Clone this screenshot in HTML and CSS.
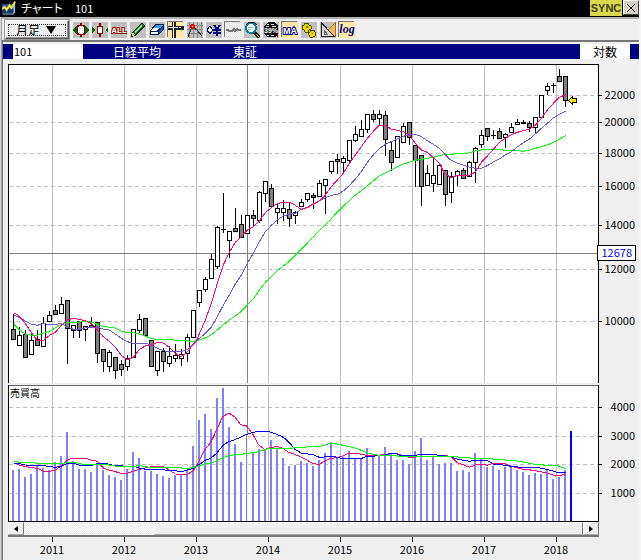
FILE: index.html
```html
<!DOCTYPE html>
<html lang="ja">
<head>
<meta charset="utf-8">
<title>チャート 101</title>
<link rel="stylesheet" href="styles.css">
</head>
<body>
<div class="window">
  <header class="titlebar">
    <svg class="app-icon" viewBox="0 0 16 16" aria-hidden="true"><path fill="#315b9c" d="M0 4h12v10H0z"/><path fill="#a8bfe0" d="M12 4l2-1v10l-2 2zM1 14h11v1H1z"/><path fill="#17366e" d="M0 9h12v4H0z"/><path fill="none" stroke="#f5e642" stroke-width="2" d="M0 9l3-2 2 3 3-5 2 3 4-7"/></svg>
    <h1 class="title">チャート</h1>
    <span class="title-code">101</span>
    <button class="sync" type="button">SYNC</button>
    <button class="close" type="button" aria-label="閉じる"><svg viewBox="0 0 10 10"><path d="M1 1l8 8M9 1L1 9"/></svg></button>
  </header>

  <nav class="toolbar" aria-label="ツール">
    <label class="period">
      <select aria-label="足種"><option>月足</option></select>
      <svg class="period-arrow" viewBox="0 0 10 8" aria-hidden="true"><path d="M0 0h10L5 8z"/></svg>
    </label>
    <button class="tool" type="button" aria-label="拡大"><svg viewBox="0 0 16 16"><path fill="#006400" d="M0 8l4-5v10zM16 8l-4-5v10z"/><path fill="#8b0000" d="M7 1h2v2h3v10H9v2H7v-2H4V3h3z"/><path fill="#fff" d="M6 4h4v1h1v6h-1v1H6v-1H5V5h1z"/></svg></button>
    <button class="tool" type="button" aria-label="縮小"><svg viewBox="0 0 16 16"><path fill="#8b0000" d="M7 1h2v3h2v8H9v3H7v-3H5V4h2z"/><path fill="#fff" d="M6 5h4v6H6z"/><path fill="#006400" d="M0 5l3 3-3 3zM16 5l-3 3 3 3z"/></svg></button>
    <button class="tool" type="button" aria-label="全体"><svg viewBox="0 0 16 16"><text class="glyph-all" x="8" y="11">ALL</text></svg></button>
    <button class="tool" type="button" aria-label="線を引く"><svg viewBox="0 0 16 16"><path fill="#002b00" d="M1 15l1-5L12 1l2 1 1 2L5 14z"/><path fill="#26842c" d="M3 10l9-8 2 2-9 8z"/><path fill="#8fe58f" d="M4 10l8-7v1l-7 7z"/><path fill="#e8d7a0" d="M2 13l1-3 2 3-3 1z"/></svg></button>
    <button class="tool" type="button" aria-label="消しゴム"><svg viewBox="0 0 16 16"><path fill="#00204a" d="M6 2h9v5l-5 6H1V9z"/><path fill="#fff" d="M4 6h6l-2 3H2z"/><path fill="#42a0e8" d="M7 3h7l-3 3H5z"/><path fill="#1659b8" d="M14 4v3l-4 5V8z"/><path fill="#fff" d="M2 10h7v2H2z"/></svg></button>
    <button class="tool pressed" type="button" aria-label="十字線"><svg viewBox="0 0 16 16"><path fill="#222" d="M4 0h4v4h8v4H8v8H4V8H0V4h4z"/><path fill="#fff" d="M5 0h1v5h4v1H6v10H5V6H0V5h5zM11 5h2v1h-2z"/></svg></button>
    <button class="tool" type="button" aria-label="高値表示"><svg viewBox="0 0 16 16"><path fill="#888" d="M2 0h1v16H2zM6 0h1v16H6zM10 0h1v16h-1zM14 0h1v16h-1zM0 3h16v1H0zM0 7h16v1H0zM0 11h16v1H0z"/><path fill="none" stroke="#333" stroke-width="1" d="M1 15l3-8 3-1 3 2 5 6"/><path fill="#e00" d="M4 2h3v1h1v3H7v1H4V6H3V3h1z"/><path fill="#fff" d="M5 4h1v1H5z"/></svg></button>
    <button class="tool" type="button" aria-label="価格"><svg viewBox="0 0 16 16"><path fill="#fff" stroke="#00007b" d="M1 8l3-4 2 3v2l-2 3z"/><path fill="none" stroke="#00007b" stroke-width="2" d="M8 3l3 4 3-4M11 7v7M7 8h8M7 11h8"/></svg></button>
    <button class="tool dither" type="button" aria-label="線グラフ"><svg viewBox="0 0 16 16"><path fill="none" stroke="#777" stroke-width="2" d="M1 8h2l1 1 3 0 2-2 1 2 2-2 1 1h3"/></svg></button>
    <button class="tool" type="button" aria-label="検索"><svg viewBox="0 0 16 16"><path stroke="#111" stroke-width="3" d="M10 10l5 5"/><circle cx="7" cy="6" r="5" fill="#fff" stroke="#087c8c" stroke-width="2"/><path fill="none" stroke="#111" d="M2 3l3-3h5l3 3"/><path stroke="#70c5d0" d="M4 5h6M4 7h3"/><path stroke="#d6b638" d="M12 12l3 3"/></svg></button>
    <button class="tool" type="button" aria-label="指標"><svg viewBox="0 0 16 16"><path fill="#111" d="M5 0h6l4 4v8l-3 3H4l-3-3V4z"/><path fill="#ddd" d="M4 2h2v1H4zM8 2h3v1H8zM3 4h3v1H3zM9 4h4v1H9zM4 13h2v1H4zM8 13h3v1H8z"/><text class="glyph-num" x="8" y="11">39%</text><path fill="#c00" d="M14 12h1v3h-1z"/></svg></button>
    <button class="tool pressed" type="button" aria-label="移動平均"><svg viewBox="0 0 16 16"><text class="glyph-ma" x="8" y="12">MA</text></svg></button>
    <button class="tool" type="button" aria-label="設定"><svg viewBox="0 0 16 16"><g fill="#e8d800" stroke="#554b00"><path d="M4 1h3l1 2 2 1v3L8 8 7 10H4L3 8 1 7V4l2-1z"/><path d="M10 8h3l1 2 1 1-1 3-2 1H9l-1-2-1-2 2-1z"/></g><path fill="#8c7d00" d="M5 4h2v2H5zM11 11h1v1h-1z"/></svg></button>
    <button class="tool" type="button" aria-label="定規"><svg viewBox="0 0 16 16"><path fill="#f3b75f" stroke="#a96818" d="M15 1v13H7V9z"/><path fill="#d8d8d8" stroke="#222" d="M1.500 1v13H14z"/><path fill="#f3c77f" stroke="#666" d="M4 8v4h3z"/></svg></button>
    <button class="tool pressed" type="button" aria-label="対数"><svg viewBox="0 0 16 16"><text class="glyph-log" x="8" y="11">log</text></svg></button>
  </nav>

  <section class="symbol" aria-label="銘柄">
    <input class="code" type="text" value="101" aria-label="銘柄コード">
    <span class="name">日経平均</span>
    <span class="market">東証</span>
    <span class="scale">対数</span>
  </section>

  <main class="content">
    <svg class="chart" id="chart" viewBox="3 59 636 463" role="img" aria-label="日経平均 月足と売買高"></svg>
    <div class="scrollbar">
      <button type="button" aria-label="左へ"><svg viewBox="0 0 4 6"><path d="M4 0v6L0 3z"/></svg></button>
      <div class="track"><div class="thumb"></div></div>
      <button type="button" aria-label="右へ"><svg viewBox="0 0 4 6"><path d="M0 0v6l4-3z"/></svg></button>
    </div>
    <svg class="years" id="years" viewBox="3 537 636 22" role="img" aria-label="年"></svg>
  </main>
</div>
<script src="chart.js"></script>
</body>
</html>
```
FILE: styles.css
```css
* { box-sizing: border-box; }

body {
  margin: 0;
  background: #efefef;
  color: #000;
  font-family: "Noto Sans CJK JP", sans-serif;
  font-size: 12px;
  line-height: 15px;
}

button { padding: 0; border: 0; border-radius: 0; font: inherit; color: inherit; }

svg { display: block; }

.window {
  min-height: 100vh;
  border-right: 2px solid #f7f7f7;
  box-shadow: inset 1px 0 #d8d8d8, inset 2px 0 #a0a0a0, inset 3px 0 #707070;
}

.titlebar {
  display: flex;
  align-items: flex-start;
  height: 17px;
  padding-left: 2px;
  background: #000;
  color: #fff;
}

.app-icon { width: 15px; height: 16px; }

.title {
  width: 54px;
  margin: 0 0 0 4px;
  font-size: 12px;
  font-weight: 400;
  font-feature-settings: "palt";
  white-space: nowrap;
}

.title-code { font-size: 11px; line-height: 17px; }

.sync {
  width: 32px;
  height: 16px;
  margin-left: auto;
  background: #d9d84c;
  color: #3c3c20;
  font-family: "Liberation Sans", sans-serif;
  font-size: 11px;
  font-weight: 700;
}

.close {
  display: grid;
  place-items: center;
  width: 16px;
  height: 15px;
  margin-left: 1px;
  border: 1px solid;
  border-color: #fff #404040 #404040 #fff;
  background: #d4d0c8;
}

.close svg { width: 10px; height: 10px; fill: none; stroke: #000; stroke-width: 1; }

.toolbar {
  display: flex;
  align-items: center;
  gap: 3px;
  height: 25px;
  margin-left: 2px;
  padding-left: 3px;
  border-top: 2px solid #b0b0b0;
  border-bottom: 2px solid #777;
  background: #efefef;
}

.period {
  display: flex;
  align-items: center;
  width: 64px;
  height: 19px;
  margin-right: 1px;
  padding: 2px;
  border: 1px solid;
  border-color: #fff #555 #555 #fff;
  box-shadow: inset -1px -1px #999, 0 0 0 1px #999;
}

.period select {
  width: 100%;
  height: 12px;
  padding: 0 0 0 7px;
  border: 1px dotted #333;
  border-radius: 0;
  appearance: none;
  background: transparent;
  font: inherit;
  line-height: 10px;
}

.period-arrow { flex: none; width: 10px; height: 8px; margin: 0 10px 0 -20px; }

.tool { width: 16px; height: 16px; background: #c0c0c0; }
.tool svg { width: 16px; height: 16px; shape-rendering: crispEdges; }
.tool.pressed { background: #ffe9a8; box-shadow: -1px -1px #777; }
.tool.dither {
  background: repeating-conic-gradient(#ddd 0 25%, #fff 0 50%) 0 0 / 2px 2px;
  box-shadow: -1px -1px #777;
}

.tool text { font-family: "Liberation Sans", sans-serif; font-weight: 700; text-anchor: middle; }
.tool .glyph-all { font-size: 8px; fill: #fff; stroke: #8b0000; stroke-width: 2; paint-order: stroke; }
.tool .glyph-ma { font-size: 9px; fill: #fff; stroke: #00007b; stroke-width: 2; paint-order: stroke; }
.tool .glyph-num { font-size: 7px; fill: #fff; }
.tool .glyph-log { font-family: "Liberation Serif", serif; font-size: 12px; font-style: italic; fill: #00007b; }

.symbol {
  display: flex;
  height: 15px;
  margin: 2px 0 0 3px;
  background: #000080;
  color: #fff;
  white-space: nowrap;
}

.code {
  width: 70px;
  height: 15px;
  margin-left: 10px;
  padding: 0 1px;
  border: 0;
  border-radius: 0;
  background: #fff;
  color: #000;
  font: inherit;
  font-size: 11px;
}

.name { width: 120px; margin-left: 30px; }
.scale { width: 50px; margin: 0 9px 0 auto; background: #fff; color: #000; text-align: center; }

.content { margin-left: 3px; }
.chart, .years { width: 100%; height: auto; }

.chart text, .years text { font-size: 11px; }
.chart .caption { font-size: 10px; }
.crisp { shape-rendering: crispEdges; }
.line { fill: none; stroke-width: 1; }
.chart .cursor-value { fill: #0000ff; }

.scrollbar { display: flex; height: 15px; margin: 0 40px 0 5px; border-bottom: 2px solid #777; }
.scrollbar button {
  display: grid;
  place-items: center;
  width: 16px;
  border: 1px solid;
  border-color: #fff #777 #aaa #fff;
  background: #efefef;
}
.scrollbar svg { width: 4px; height: 6px; }
.track {
  flex: 1;
  padding-left: 22%;
  background: repeating-conic-gradient(#e8e8e8 0 25%, #fff 0 50%) 0 0 / 2px 2px;
}
.thumb { height: 100%; border: 1px solid; border-color: #fff #777 #aaa #fff; background: #efefef; }
```
FILE: chart.js
```javascript
const NS = "http://www.w3.org/2000/svg";
const chart = document.getElementById("chart");
const years = document.getElementById("years");

function add(parent, name, attrs, text) {
  const el = document.createElementNS(NS, name);
  for (const key in attrs) el.setAttribute(key, attrs[key]);
  if (text !== undefined) el.textContent = text;
  parent.appendChild(el);
  return el;
}

function rect(x, y, width, height, fill, parent = chart) {
  return add(parent, "rect", { x, y, width, height, fill, class: "crisp" });
}

// One candle a month: high, body top, body bottom, low, and 1 for a falling month.
const candles = [
  [314,329,339,339,1],[327,335,345,345,0],[330,334,357,357,1],[332,340,354,354,0],[330,339,345,345,1],
  [317,323,346,346,0],[311,315,321,321,0],[305,310,314,314,1],[297,304,313,313,0],[300,300,328,363,1],
  [325,325,330,337,0],[321,321,330,337,1],[326,326,329,340,0],[317,325,327,327,1],[322,322,353,362,1],
  [349,349,361,371,1],[350,352,366,371,0],[357,357,370,378,1],[360,364,369,375,1],[355,358,366,370,0],
  [329,329,357,357,0],[314,319,330,332,0],[318,318,335,335,1],[340,340,366,366,1],[351,351,370,375,0],
  [348,351,361,371,1],[346,356,363,366,0],[344,355,358,361,0],[349,354,358,365,0],[334,337,353,361,0],
  [310,310,337,337,0],[290,290,302,306,0],[277,279,289,291,0],[254,259,278,278,0],[226,227,266,268,0],
  [193,229,229,232,0],[231,231,240,257,0],[208,228,231,231,1],[215,224,237,237,1],[215,215,233,233,0],
  [210,215,218,226,1],[191,192,220,222,0],[181,181,193,201,0],[184,188,206,206,1],[203,208,212,223,0],
  [200,208,212,220,0],[203,209,218,226,1],[211,212,215,223,0],[199,202,206,206,0],[193,193,199,201,0],
  [193,195,197,208,1],[180,183,196,196,0],[179,179,185,213,0],[161,161,171,173,0],[154,159,161,173,1],
  [156,158,162,171,0],[140,140,160,162,0],[126,134,140,141,0],[120,129,136,136,0],[114,114,129,132,0],
  [110,114,119,121,1],[110,114,118,125,0],[111,115,139,155,1],[141,150,162,170,1],[136,136,157,157,0],
  [123,126,142,142,0],[122,122,137,144,1],[145,145,160,186,1],[155,155,186,205,1],[165,173,185,185,0],
  [159,175,183,191,0],[165,165,184,184,0],[170,170,194,205,1],[172,176,192,202,0],[170,171,175,185,0],
  [168,170,178,178,1],[161,162,176,176,0],[147,148,162,182,0],[130,135,144,147,0],[128,128,136,140,1],
  [130,135,135,138,0],[128,131,138,138,1],[133,134,137,147,0],[123,127,132,132,0],[119,122,124,124,0],
  [120,122,123,123,1],[121,123,127,131,1],[117,117,127,132,0],[95,95,117,117,0],[83,86,90,94,0],
  [83,85,85,92,0],[69,76,81,81,1],[76,76,100,106,1]
];

// Volume bar tops, in thirds of a unit below y = 380.
const volumes = [
  270,267,291,282,257,264,270,246,228,156,243,267,267,276,252,270,285,291,300,267,216,234,272,273,282,288,294,284,284,270,198,
  120,102,147,54,24,141,192,246,165,219,207,210,180,204,234,258,255,243,249,258,240,219,186,231,231,213,236,236,204,228,228,
  201,222,240,240,252,213,174,240,228,252,249,249,273,270,276,219,237,261,258,270,261,260,270,276,285,279,282,268,297,291,270
];

// Each average is a chain of pieces: origin x, origin y, then points in thirds of a unit.
const priceAverages = {
  "#00ff00": [
    [0,280, 42,133,58,150,76,162,94,166,112,166,130,160,148,154,166,144,184,135,202,129,238,126,256,125,274,126,292,133,310,139,346,144,364,154,382,157,400,158,418,162,436,168,454,176,472,178,508,179,580,184],
    [170,170, 88,510,106,503,124,494,142,480,160,464,178,450,196,438,214,424,232,405,250,386,268,360,286,337,322,302,358,274,394,238,430,200,466,165],
    [310,95, 60,375,92,341,136,300,154,287,172,272,208,243,244,224,280,207,316,196,352,190,370,187,404,178],
    [450,60, 0,284,22,280,50,280,76,273,94,270,112,268,148,268,166,271,202,271,220,274,238,271,256,265,292,255,310,247,328,238,347,227]
  ],
  "#6a5acd": [
    [0,280, 42,106,58,112,76,124,94,132,112,136,130,131,148,133,166,133,184,131,202,141,220,148,238,148,256,144,274,142,292,142,310,147,328,150,346,162,364,175,382,185,400,190,436,190,454,195,472,205,490,212,508,216,544,215,562,208,580,193],
    [170,170, 80,512,106,490,124,472,142,440,160,405,178,375,196,342,214,315,232,280,250,250,268,215,286,185,304,166,322,150,340,138,358,133,376,130,394,118,412,112],
    [310,95, 10,326,46,308,64,301,82,298,100,288,118,272,136,252,154,230,172,202,190,180,208,161,226,148,244,140,262,132,280,124,298,119,316,118,334,125,352,137,370,148,388,160,406,179],
    [450,60, 0,298,22,309,40,315,58,321,76,325,94,325,112,317,130,306,148,297,166,284,184,275,202,261,220,248,238,238,256,222,274,205,292,190,310,174,328,163,347,154]
  ],
  "#ff0080": [
    [0,280, 42,100,52,103,76,130,94,158,112,181,130,181,150,165,166,157,184,136,202,120,220,115,238,118,256,122,274,130,292,150,310,170,328,184,346,202,364,226,382,240,400,232,418,208,436,198,454,195,472,187,490,189,508,202,526,220,544,230,562,216,580,193],
    [170,170, 80,510,106,450,124,400,142,340,160,285,178,247,196,217,214,200,232,180,250,170,268,153,286,128,304,113,322,101,340,97,358,97,376,106,394,118,412,113],
    [310,95, 10,328,28,318,46,300,64,275,82,255,100,235,118,205,136,180,154,155,172,130,190,109,208,91,226,92,244,102,262,106,280,110,298,120,316,145,334,165,352,172,370,188,388,205,404,236],
    [450,60, 4,353,22,346,58,346,76,336,94,307,112,288,130,268,148,247,166,235,184,224,202,217,220,212,238,208,256,196,274,175,292,150,310,130,328,112,347,104]
  ]
};

const volumeAverages = {
  "#ff0080": [
    [0,380, 42,249,58,255,76,260,94,262,112,265,130,274,150,274,166,270,184,258,202,240,214,235,256,235,274,240,292,244,310,264,328,270,346,275,364,280,382,280,400,274,418,268,436,264,454,260,490,260,508,270,526,282,562,283,580,272,599,240],
    [200,380, 14,210,32,187,50,150,68,110,87,99,104,110,122,134,140,138,158,162,176,195,194,208,212,203,230,199,248,205,266,217,284,223,302,230,320,240,338,250,356,254,374,243,392,235,410,233,428,228,446,220,470,220,500,226,530,226,560,223,590,220],
    [400,380, 0,224,26,232,50,231,140,227,155,232,172,248,190,254,208,262,226,255,244,252,262,256,280,250,310,249,328,257,346,262,365,267,400,271,420,275,445,280,460,285,478,287,497,282]
  ],
  "#0000ff": [
    [0,380, 42,249,58,251,76,255,112,256,130,257,166,262,184,259,202,250,220,250,238,255,256,255,274,257,292,251,320,251,340,256,382,259,400,259,420,265,440,268,480,268,508,272,550,274,562,270,580,265,599,253],
    [200,380, 14,242,32,235,50,220,68,197,86,185,104,179,122,172,140,163,158,157,180,154,205,154,220,159,240,167,255,175,270,190,285,208,305,220,340,224,358,232,400,229,425,235,485,235,500,229,550,227,570,220,590,222],
    [400,380, 0,226,40,228,60,223,100,223,120,227,150,229,170,237,208,244,226,241,250,241,265,243,280,252,310,255,340,260,370,262,410,262,430,266,460,273,475,278,497,278]
  ],
  "#00ff00": [
    [0,380, 42,244,58,247,100,247,112,251,190,251,202,247,225,248,256,254,320,254,350,259,400,260,418,256,440,261,530,262,560,266,580,262,599,257],
    [200,380, 14,252,35,250,50,242,68,234,90,226,130,222,170,216,205,206,270,205,300,202,360,199,395,189,420,194,470,205,500,218,530,225,570,225],
    [400,380, 0,229,160,229,190,233,230,235,270,236,300,239,345,242,380,248,410,254,470,257,497,266]
  ]
};

const priceGrid = [[22000,95],[20000,122],[18000,153],[16000,186],[14000,225],[12000,269],[10000,321]];
const volumeGrid = [[4000,407],[3000,436],[2000,464],[1000,493]];
const yearLines = [2011,2012,2013,2014,2015,2016,2017,2018].map((year, i) => [year, 52 + 72 * i]);

function drawAverages(set) {
  for (const color in set) {
    const points = [];
    for (const [ox, oy, ...p] of set[color]) {
      for (let i = 0; i < p.length; i += 2) points.push(`${ox + p[i] / 3},${oy + p[i + 1] / 3}`);
    }
    add(chart, "polyline", { points: points.join(" "), stroke: color, class: "line crisp" });
  }
}

// Panels and grid
rect(8, 64, 591, 319, "#fff");
rect(8, 385, 591, 137, "#fff");
for (const [value, y] of [...priceGrid, ...volumeGrid]) {
  add(chart, "line", { x1: 9, x2: 598, y1: y + 0.5, y2: y + 0.5, stroke: "#c0c0c0", "stroke-dasharray": "4 3", class: "crisp" });
  rect(599, y, 3, 1, "#000");
  add(chart, "text", { x: 635, y: y + 4, "text-anchor": "end" }, value);
}
for (const [year, x] of yearLines) {
  rect(x, 65, 1, 318, "#c0c0c0");
  rect(x, 386, 1, 135, "#c0c0c0");
  rect(x, 537, 1, 5, "#000", years);
  add(years, "text", { x, y: 554, "text-anchor": "middle" }, year);
}

// Cross cursor
rect(9, 253, 589, 1, "#808080");
rect(247, 65, 1, 318, "#808080");
rect(247, 386, 1, 49, "#808080");

candles.forEach(([high, top, bottom, low, falling], i) => {
  const x = 13 + 6 * i;
  rect(x, high, 1, low - high + 1, "#000");
  rect(x - 2, top, 5, bottom - top + 1, "#000");
  if (bottom - top > 1) rect(x - 1, top + 1, 3, bottom - top - 1, falling ? "#808080" : "#fff");
});
drawAverages(priceAverages);

volumes.forEach((v, i) => {
  const y = Math.round(380 + v / 3);
  rect(12 + 6 * i, y, 2, 521 - y, "#8080ff");
});
rect(247, 435, 1, 86, "#f5f0c0");
rect(570, 431, 2, 90, "#0000ff");
drawAverages(volumeAverages);

// Frames
rect(8, 64, 591, 1, "#000");
rect(8, 64, 1, 319, "#000");
rect(598, 64, 1, 319, "#000");
rect(8, 385, 591, 1, "#666");
rect(8, 385, 1, 137, "#000");
rect(598, 385, 1, 137, "#000");
rect(8, 521, 591, 1, "#000");

add(chart, "text", { x: 10, y: 397, class: "caption" }, "売買高");
add(chart, "path", { d: "M568.500 100.500l4-4v2h4v4h-4v2z", fill: "#ffee00", stroke: "#000", class: "crisp" });

// Cursor value
add(chart, "rect", { x: 597.5, y: 245.5, width: 38, height: 15, fill: "#fff", stroke: "#000", class: "crisp" });
add(chart, "text", { x: 632, y: 257, "text-anchor": "end", class: "cursor-value" }, "12678");
```
